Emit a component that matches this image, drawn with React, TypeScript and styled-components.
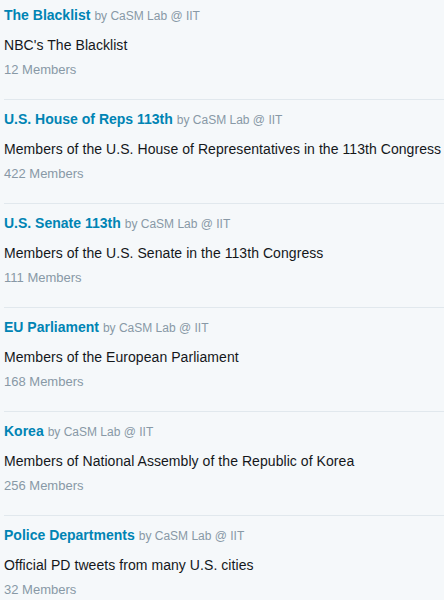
import React from "react";
import styled, { createGlobalStyle } from "styled-components";

const Global = createGlobalStyle`
  html, body { margin: 0; padding: 0; background: #f5f8fa; }
  body { font-family: "Liberation Sans", Arial, sans-serif; }
`;

const List = styled.div`
  display: flex;
  flex-direction: column;
  padding-left: 4px;
`;

const Item = styled.div`
  display: flex;
  flex-direction: column;
  padding: 10px 0 20px 0;
  border-bottom: 1px solid #e1e8ed;
  &:first-child { padding-top: 6px; }
`;

const TitleRow = styled.div`
  display: flex;
  align-items: baseline;
  gap: 4px;
  line-height: 18px;
  white-space: nowrap;
`;

const Title = styled.a`
  font-size: 14px;
  font-weight: bold;
  color: #0084b4;
  text-decoration: none;
`;

const Byline = styled.span`
  font-size: 12px;
  color: #8899a6;
`;

const Desc = styled.div`
  margin-top: 10px;
  font-size: 14px;
  line-height: 20px;
  color: #14171a;
  white-space: nowrap;
  letter-spacing: 0.06px;
`;

const Members = styled.div`
  margin-top: 6px;
  font-size: 13px;
  line-height: 18px;
  color: #8899a6;
`;

const lists = [
  { title: "The Blacklist", desc: "NBC's The Blacklist", count: 12 },
  { title: "U.S. House of Reps 113th", desc: "Members of the U.S. House of Representatives in the 113th Congress", count: 422 },
  { title: "U.S. Senate 113th", desc: "Members of the U.S. Senate in the 113th Congress", count: 111 },
  { title: "EU Parliament", desc: "Members of the European Parliament", count: 168 },
  { title: "Korea", desc: "Members of National Assembly of the Republic of Korea", count: 256 },
  { title: "Police Departments", desc: "Official PD tweets from many U.S. cities", count: 32 },
];

export default function App() {
  return (
    <>
      <Global />
      <List>
        {lists.map((l) => (
          <Item key={l.title}>
            <TitleRow>
              <Title href="#">{l.title}</Title>
              <Byline>by CaSM Lab @ IIT</Byline>
            </TitleRow>
            <Desc>{l.desc}</Desc>
            <Members>{l.count} Members</Members>
          </Item>
        ))}
      </List>
    </>
  );
}
